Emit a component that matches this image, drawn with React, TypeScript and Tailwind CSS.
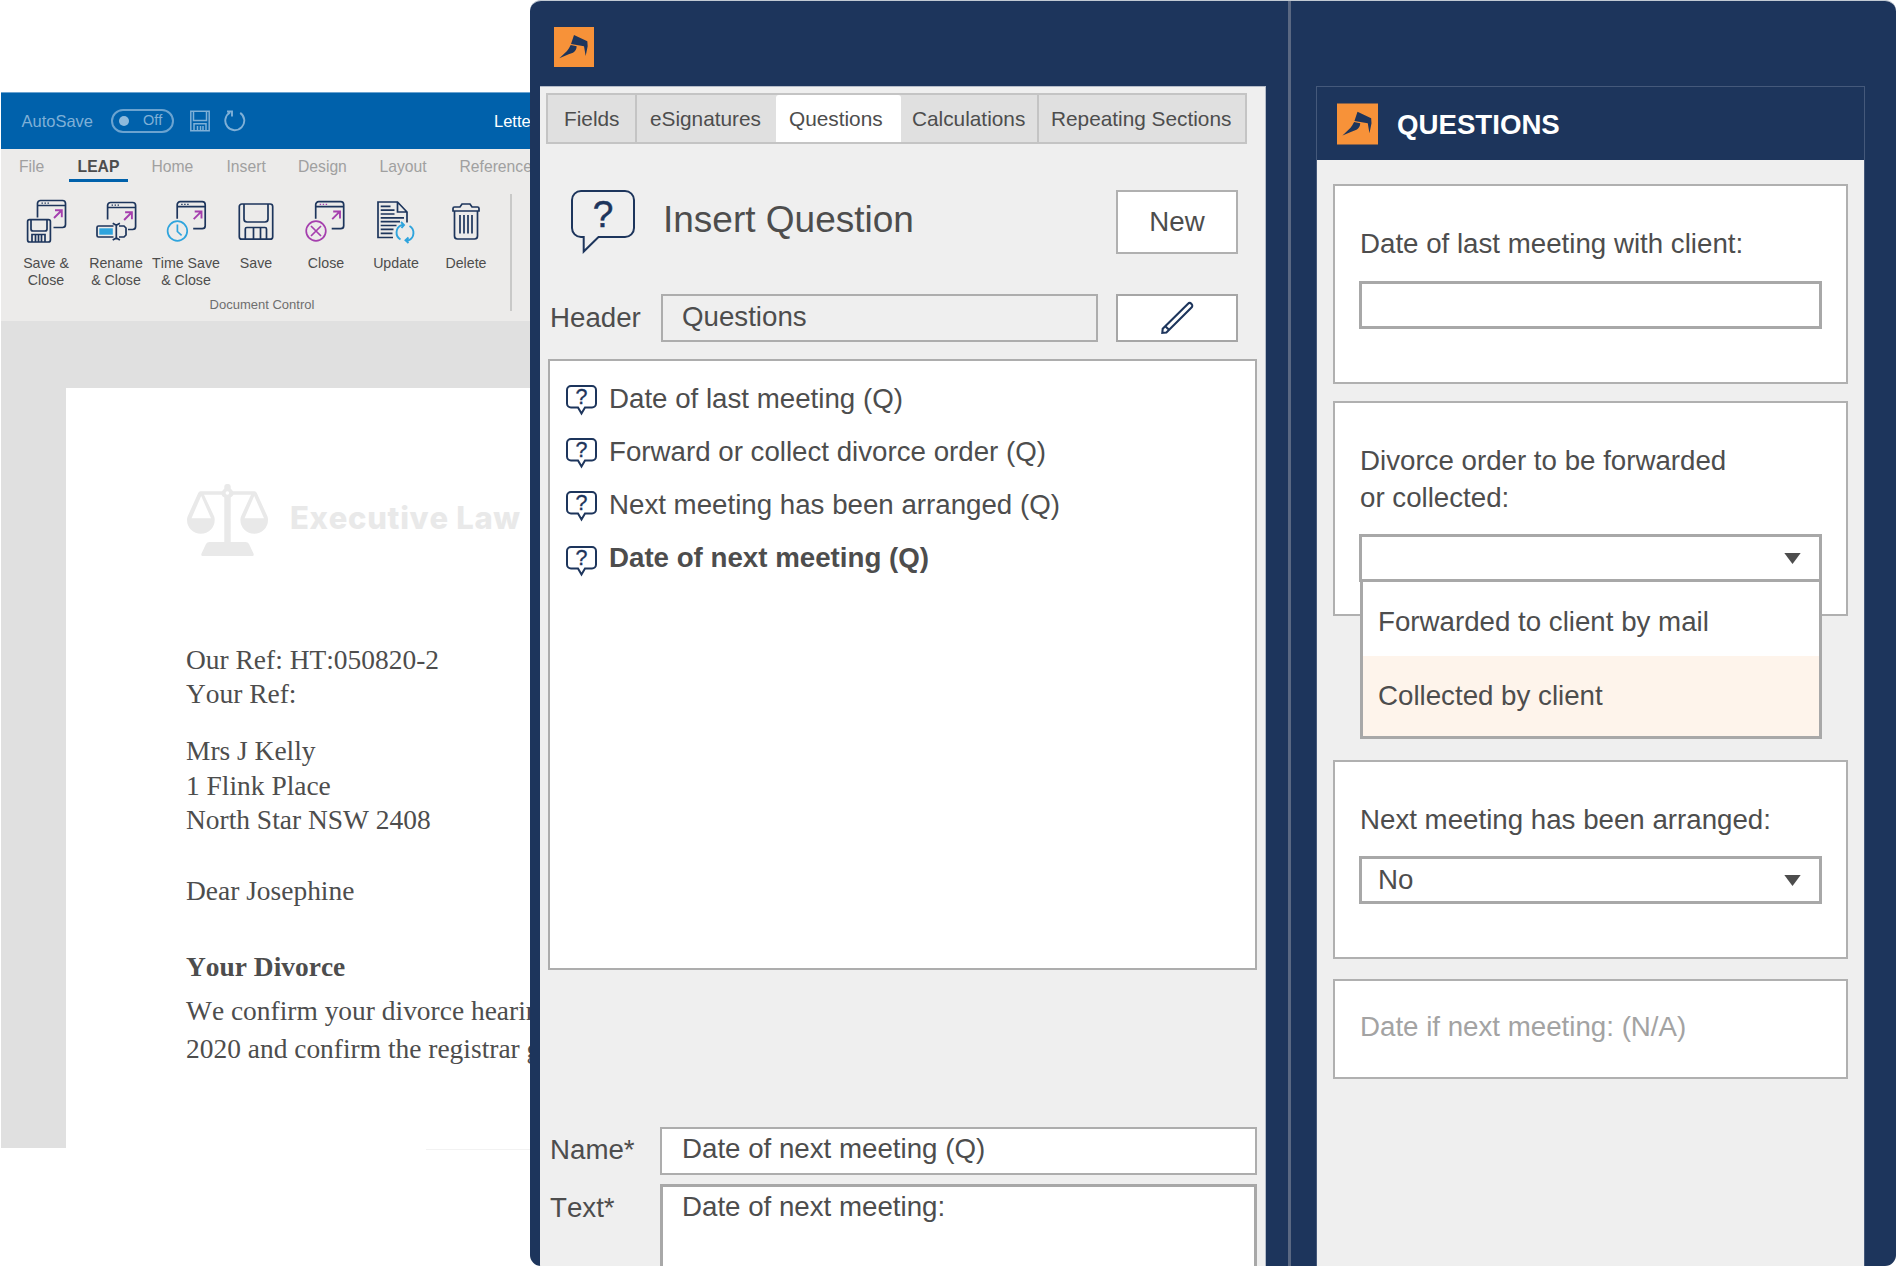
import type { ReactNode } from "react";

const NAVY = "#1d355c";
const PURPLE = "#a53fae";
const SKY = "#2fa4dd";

const ribbonTabs = [
  { label: "File", width: "w-[58px]" },
  { label: "LEAP", width: "w-[74.5px]", active: true },
  { label: "Home", width: "w-[75px]" },
  { label: "Insert", width: "w-[71.5px]" },
  { label: "Design", width: "w-[81.5px]" },
  { label: "Layout", width: "w-[80px]" },
  { label: "Reference", width: "w-[71px]" },
];

const panelTabs = [
  { label: "Fields", className: "w-[89px] border-r-2 pl-[16px]" },
  { label: "eSignatures", className: "w-[139px] pl-[13px]" },
  { label: "Questions", className: "w-[125px] pl-[13px] bg-white rounded-t-[3px]" },
  { label: "Calculations", className: "w-[138px] border-r-2 pl-[11px]" },
  { label: "Repeating Sections", className: "flex-1 pl-[12px]" },
];

const questions = [
  { label: "Date of last meeting (Q)" },
  { label: "Forward or collect divorce order (Q)" },
  { label: "Next meeting has been arranged (Q)" },
  { label: "Date of next meeting (Q)", selected: true },
];

function LeapLogo({ className }: { className: string }) {
  return (
    <svg className={className} viewBox="0 0 120 120">
      <rect width="120" height="120" fill="#f79239" />
      <path d="M60 24L100 43L101 58L95 87L90 58L51 51Z" fill={NAVY} />
      <path d="M50 54L68 58C68 66 64 73 57 77L44 82L16 94L39 72C43 67 47 61 50 54Z" fill={NAVY} />
    </svg>
  );
}

function RibbonSvg({ children }: { children: ReactNode }) {
  return (
    <svg width="44" height="46" viewBox="0 0 44 46" fill="none" stroke={NAVY} strokeWidth="1.7">
      {children}
    </svg>
  );
}

// Browser window with the "open" arrow, shared by the "... & Close" icons
function MiniWindow({ x, y, dots = NAVY }: { x: number; y: number; dots?: string }) {
  return (
    <g transform={`translate(${x} ${y})`}>
      <path d="M0 17V3A3 3 0 0 1 3 0H25A3 3 0 0 1 28 3V24A3 3 0 0 1 25 27H16M0 5H28" />
      <path d="M4 2.6h1.4M7 2.6h1.4M10 2.6h1.4" stroke={dots} strokeWidth="1.2" />
      <path d="M16.5 17.5L24 10M17.5 9.8H24.3V16.7" stroke={PURPLE} strokeWidth="1.9" />
    </g>
  );
}

const ribbonActions = [
  {
    label: ["Save &", "Close"],
    icon: (
      <RibbonSvg>
        <MiniWindow x={13.5} y={2.5} />
        <rect x="3.6" y="21.6" width="22.8" height="22.4" rx="2" fill="#ecebea" />
        <path d="M7 22V31A2 2 0 0 0 9 33H21A2 2 0 0 0 23 31V22M8 44V36.5H21V44M11.5 37V44M14.5 37V44M17.5 37V44" />
      </RibbonSvg>
    ),
  },
  {
    label: ["Rename", "& Close"],
    icon: (
      <RibbonSvg>
        <MiniWindow x={13.6} y={4.5} />
        <rect x="2" y="26" width="32" height="15" fill="#ecebea" stroke="none" />
        <path d="M19.5 28H4.5A1.5 1.5 0 0 0 3 29.5V37.5A1.5 1.5 0 0 0 4.5 39H19.5M25 28H30L32 30V37L30 39H25" />
        <rect x="5.3" y="30.3" width="13.5" height="6.4" fill={SKY} stroke="none" />
        <path d="M22.3 26V41.5M18.7 25.3L22.3 27.3L25.9 25.3M18.7 42L22.3 40L25.9 42" />
      </RibbonSvg>
    ),
  },
  {
    label: ["Time Save", "& Close"],
    icon: (
      <RibbonSvg>
        <MiniWindow x={13.2} y={3.7} />
        <circle cx="13.4" cy="33" r="12" fill="#ecebea" stroke="none" />
        <circle cx="13.4" cy="33" r="9.8" stroke={SKY} />
        <path d="M13.4 26.5V33.5L17.6 37.4" stroke={SKY} />
      </RibbonSvg>
    ),
  },
  {
    label: ["Save"],
    icon: (
      <RibbonSvg>
        <rect x="5.3" y="6" width="33.4" height="35.2" rx="2.5" />
        <path d="M10 6V21A3 3 0 0 0 13 24H31A3 3 0 0 0 34 21V6" />
        <path d="M11.3 41V31A1.5 1.5 0 0 1 12.8 29.5H31A1.5 1.5 0 0 1 32.5 31V41M19.5 30V41M26.5 30V41" />
      </RibbonSvg>
    ),
  },
  {
    label: ["Close"],
    icon: (
      <RibbonSvg>
        <MiniWindow x={11.7} y={3.7} dots={PURPLE} />
        <circle cx="12" cy="33" r="12" fill="#ecebea" stroke="none" />
        <circle cx="12" cy="33" r="9.8" stroke={PURPLE} />
        <path d="M7 28L17 38M17 28L7 38" stroke={PURPLE} />
      </RibbonSvg>
    ),
  },
  {
    label: ["Update"],
    icon: (
      <RibbonSvg>
        <path d="M19 39.5H4V4H23.5L33 14V24.5M23.5 4V14H33" />
        <path d="M6.7 8.3H16.5M6.7 12.2H20.5M6.7 16H20.5M6.7 19.8H30M6.7 23.7H26M6.7 27.5H22.5M6.7 31.3H19.5M6.7 35.3H18.5" />
        <path
          d="M26.5 41.5A8 8 0 0 1 27.5 27.2L29.5 27M27 24L30 27L27.5 30M35.5 28A8 8 0 0 1 34.5 42.3H31.5M34.5 39.5L31.5 42.3L34.5 45"
          stroke={SKY}
          strokeWidth="1.9"
        />
      </RibbonSvg>
    ),
  },
  {
    label: ["Delete"],
    icon: (
      <RibbonSvg>
        <path d="M9 13V10.5A1.5 1.5 0 0 1 10.5 9H16L18 6H26L28 9H33.5A1.5 1.5 0 0 1 35 10.5V13ZM10.5 13V38A3 3 0 0 0 13.5 41H30.5A3 3 0 0 0 33.5 38V13" />
        <path d="M16 17V35.5M20 17V35.5M24 17V35.5M28 17V35.5" />
      </RibbonSvg>
    ),
  },
];

function WordWindow() {
  return (
    <div className="ml-px mt-[92px] flex h-[1058px] w-[529px] shrink-0 flex-col overflow-hidden whitespace-nowrap">
      <div className="flex h-[57px] shrink-0 items-center border-t border-[#6ba3d0] bg-[#0061ab] text-[16.5px] text-[#7fb0d7]">
        <span className="w-[91px] shrink-0 pl-[20.5px]">AutoSave</span>
        <div className="ml-[19px] flex h-6 w-[63px] shrink-0 items-center gap-[14px] rounded-full border-2 border-[#6ba3d0] pl-[6px] text-[14.5px]">
          <span className="size-[10px] rounded-full bg-[#8fbadc]" />
          Off
        </div>
        <svg className="ml-[15px] shrink-0" width="22" height="22" viewBox="0 0 22 22" fill="none" stroke="#7fb0d7" strokeWidth="1.5">
          <path d="M1.8 1.3H20.2V20.7H1.8ZM4.5 1.3V10.5H17.5V1.3M5 20.7V13.7H17V20.7M8.5 16V20.7M11.5 16V20.7M14 16V20.7" />
        </svg>
        <svg className="ml-[13px] shrink-0" width="22" height="22" viewBox="0 0 22 22" fill="none" stroke="#7fb0d7" strokeWidth="1.9">
          <path d="M16.2 2.9A9.5 9.5 0 1 1 6 2.5M3 1.5H8V6.5" />
        </svg>
        <span className="ml-[248px] shrink-0 text-white">Lette</span>
      </div>

      <div className="flex h-[172px] shrink-0 flex-col bg-[#ecebea]">
        <div className="flex h-[33px] pl-[18px] pt-[8px] text-[15.7px] leading-5 text-[#a0a0a0]">
          {ribbonTabs.map((tab) => (
            <div key={tab.label} className={`${tab.width} shrink-0`}>
              {tab.active ? (
                <div className="-ml-[8px] w-[59px] border-b-[3px] border-[#0061ab] pb-[2px] text-center font-bold text-[#4d4d4d]">
                  {tab.label}
                </div>
              ) : (
                tab.label
              )}
            </div>
          ))}
        </div>
        <div className="flex pl-[10px] pt-[12px]">
          <div className="flex w-[501px] flex-col border-r-2 border-[#c9c9c8]">
            <div className="flex h-[104px] pt-[4px]">
              {ribbonActions.map((action) => (
                <div key={action.label.join(" ")} className="flex w-[70px] flex-col items-center">
                  {action.icon}
                  <div className="mt-[11px] text-center text-[14.2px] leading-[17px] text-[#4d4d4d]">
                    {action.label.map((line) => (
                      <div key={line}>{line}</div>
                    ))}
                  </div>
                </div>
              ))}
            </div>
            <div className="h-[13px] w-[502px] text-center text-[13px] leading-[13px] text-[#6e6e6e]">Document Control</div>
          </div>
        </div>
      </div>

      <div className="flex flex-1 bg-[#e0e0e0] pl-[65px] pt-[67px]">
        <div className="w-[464px] bg-white pl-[120px] pt-[96px] font-['Liberation_Serif',serif] text-[27.45px] leading-[34px] text-[#4d4d4d]">
          <div className="ml-px flex items-center">
            <svg className="shrink-0" width="82" height="72" viewBox="0 0 82 72" fill="#e9e9e9">
              <path d="M37.3 2.5Q37.3 0 39.5 0H41.5Q43.7 0 43.7 2.5V4.5L46 7.3H67.5Q69 7.3 69.8 9L80.5 32.5Q81 34 81 36A13.8 13.8 0 0 1 53.4 36Q53.4 34 54 32.5L64 10.7H46.5Q45 13 43.7 13.5V58H58.5Q61 58 62 60L66.5 69.5Q67.2 72 65.5 72H15.5Q13.8 72 14.5 69.5L19 60Q20 58 22.5 58H37.3V13.5Q35.5 13 34.5 10.7H17L27.2 32.5Q27.7 34 27.7 36A13.8 13.8 0 0 1 0 36Q0 34 .6 32.5L11.2 9Q12 7.3 13.5 7.3H35L37.3 4.5Z" />
              <path d="M14.2 12L24 34.3H4.5ZM67.2 12L77 34.3H57.5Z" fill="#fff" />
              <circle cx="40.4" cy="9" r="1.8" fill="#fff" />
            </svg>
            <span className="pb-[5px] pl-[21px] font-['Inter',sans-serif] text-[31px] font-extrabold tracking-[0.7px] text-[#e9e9e9]">
              Executive Law
            </span>
          </div>
          <div className="mt-[87px]">
            <p>Our Ref: HT:050820-2</p>
            <p>Your Ref:</p>
          </div>
          <div className="mt-[23px] leading-[34.5px]">
            <p>Mrs J Kelly</p>
            <p>1 Flink Place</p>
            <p>North Star NSW 2408</p>
          </div>
          <p className="mt-[36px]">Dear Josephine</p>
          <p className="mt-[42px] font-bold">Your Divorce</p>
          <div className="mt-[8px] leading-[38.3px]">
            <p>We confirm your divorce hearin</p>
            <p>2020 and confirm the registrar g</p>
          </div>
        </div>
      </div>
      <div className="ml-[425px] mt-px h-px shrink-0 bg-[#f2f2f2]" />
    </div>
  );
}

function BigQuestionIcon() {
  return (
    <svg width="64" height="64" viewBox="0 0 64 64" fill="none" stroke={NAVY} strokeWidth="2">
      <path d="M10 1H54A9 9 0 0 1 63 10V38A9 9 0 0 1 54 47H27.5L12.7 61.5V47H10A9 9 0 0 1 1 38V10A9 9 0 0 1 10 1Z" />
      <text x="32" y="37" fontSize="37" textAnchor="middle" fill={NAVY} strokeWidth="0.5">
        ?
      </text>
    </svg>
  );
}

function QuestionIcon() {
  return (
    <svg width="31" height="31" viewBox="0 0 31 31" fill="none" stroke={NAVY} strokeWidth="2">
      <path d="M5 1H26A4 4 0 0 1 30 5V18.5A4 4 0 0 1 26 22.5H19L15.5 28.5L12 22.5H5A4 4 0 0 1 1 18.5V5A4 4 0 0 1 5 1Z" />
      <text x="15.5" y="19.3" fontSize="21.5" textAnchor="middle" fill={NAVY} strokeWidth="0.3">
        ?
      </text>
    </svg>
  );
}

function InsertQuestionPanel() {
  return (
    <div className="ml-[10px] flex w-[726px] flex-1 flex-col border-r border-t border-[#b4bbc8] bg-[#efefef]">
      <div className="ml-[6px] mt-[6px] flex h-[51px] w-[701px] shrink-0 border-2 border-[#c4c4c4] bg-[#e0e0e0] text-[20.8px]">
        {panelTabs.map((tab) => (
          <div key={tab.label} className={`flex items-center border-[#c4c4c4] ${tab.className}`}>
            {tab.label}
          </div>
        ))}
      </div>

      <div className="ml-[31px] mt-[46px] flex h-16 shrink-0 items-center">
        <BigQuestionIcon />
        <h2 className="w-[481px] pb-[4px] pl-[28px] text-[37px]">Insert Question</h2>
        <button className="h-16 w-[122px] border-2 border-[#b0b0b0] bg-white">New</button>
      </div>

      <div className="mt-10 flex h-12 shrink-0 pl-[10px]">
        <label className="flex w-[111px] items-center">Header</label>
        <div className="flex w-[437px] items-center border-2 border-[#adadad] pb-[3px] pl-[19px]">Questions</div>
        <button className="ml-[18px] flex w-[122px] items-center justify-center border-2 border-[#a6a6a6] bg-white">
          <svg width="34" height="34" viewBox="0 0 34 34" fill="none" stroke={NAVY} strokeWidth="2.1">
            <path d="M2.3 31.8L2.7 27.8L27.8 2.9A2.6 2.6 0 0 1 31.5 6.6L6.4 31.5ZM5.5 25.5L9 28.8" />
          </svg>
        </button>
      </div>

      <div className="ml-[8px] mt-[17px] h-[611px] w-[709px] shrink-0 border-2 border-[#adadad] bg-white pl-[16px] pt-[11px]">
        {questions.map((question) => (
          <div
            key={question.label}
            className={`flex h-[53px] items-center gap-[12px] ${question.selected ? "font-bold" : "font-normal"}`}
          >
            <div className={question.selected ? "pt-[7px] font-normal" : "pt-[4px]"}>
              <QuestionIcon />
            </div>
            {question.label}
          </div>
        ))}
      </div>

      <div className="mt-[157px] flex h-12 shrink-0 pl-[10px]">
        <label className="flex w-[110px] items-center pb-[2px]">Name*</label>
        <div className="flex w-[597px] items-center border-2 border-[#adadad] bg-white pb-[4px] pl-[20px]">
          Date of next meeting (Q)
        </div>
      </div>
      <div className="mt-[9px] flex flex-1 pl-[10px] leading-[37px]">
        <label className="w-[110px] pt-[5px]">Text*</label>
        <div className="w-[597px] border-[3px] border-b-0 border-[#a8a8a8] bg-white pl-[19px] pt-px">
          Date of next meeting:
        </div>
      </div>
    </div>
  );
}

function SelectBox({ value, children }: { value?: string; children?: ReactNode }) {
  return (
    <div className="relative -ml-px mt-[18px] flex h-[48px] w-[463px] items-center justify-between border-[3px] border-[#a8a8a8] pl-[16px] pr-[18px]">
      <span className="pb-px">{value}</span>
      <svg width="17" height="11" viewBox="0 0 17 11">
        <path d="M.3 0H16.7L8.5 11Z" fill="#4d4d4d" />
      </svg>
      {children}
    </div>
  );
}

function QuestionsPanel() {
  return (
    <div className="ml-[25px] mt-[85px] flex w-[549px] flex-col border border-b-0 border-[#45597b] bg-[#efefef] leading-[37px]">
      <div className="flex h-[73px] shrink-0 items-center bg-[#1d355c] pl-5">
        <LeapLogo className="h-[42px] w-[41px]" />
        <span className="pl-[19px] pt-px text-[27.65px] font-bold text-white">QUESTIONS</span>
      </div>
      <div className="flex flex-col pl-[16px] pt-6">
        <div className="h-[200px] w-[515px] border-2 border-[#b0b0b0] bg-white pl-[25px] pt-[39px]">
          <p>Date of last meeting with client:</p>
          <div className="-ml-px mt-[19px] h-[48px] w-[463px] border-[3px] border-[#a8a8a8]" />
        </div>
        <div className="mt-[17px] h-[215px] w-[515px] border-2 border-[#b0b0b0] bg-white pl-[25px] pt-[39px]">
          <p>
            Divorce order to be forwarded
            <br />
            or collected:
          </p>
          <SelectBox>
            <div className="absolute -left-[2px] top-[42px] w-[462px] border-[3px] border-[#a8a8a8] bg-white">
              <div className="flex h-[74px] items-center pl-[15px] pt-[5px]">Forwarded to client by mail</div>
              <div className="flex h-[80px] items-center bg-[#fef4eb] pb-[2px] pl-[15px]">Collected by client</div>
            </div>
          </SelectBox>
        </div>
        <div className="mt-[144px] h-[199px] w-[515px] border-2 border-[#b0b0b0] bg-white pl-[25px] pt-[39px]">
          <p>Next meeting has been arranged:</p>
          <SelectBox value="No" />
        </div>
        <div className="mt-[20px] h-[100px] w-[515px] border-2 border-[#b0b0b0] bg-white pl-[25px] pt-[27px] text-[#a3a3a3]">
          Date if next meeting: (N/A)
        </div>
      </div>
    </div>
  );
}

export default function App() {
  return (
    <div className="flex h-[1266px] w-[1897px] overflow-hidden bg-white font-['Liberation_Sans',Arial,sans-serif] text-[#4d4d4d] [font-kerning:none]">
      <WordWindow />
      <div className="flex w-[1366px] shrink-0 overflow-hidden rounded-[11px] border-t border-[#c2cad3] bg-[#1d355c] text-[27.7px]">
        <div className="flex w-[758px] flex-col">
          <div className="flex h-[85px] shrink-0 pl-6 pt-[26px]">
            <LeapLogo className="size-10" />
          </div>
          <InsertQuestionPanel />
        </div>
        <div className="flex border-l-[3px] border-[#5a6882]">
          <QuestionsPanel />
        </div>
      </div>
    </div>
  );
}
